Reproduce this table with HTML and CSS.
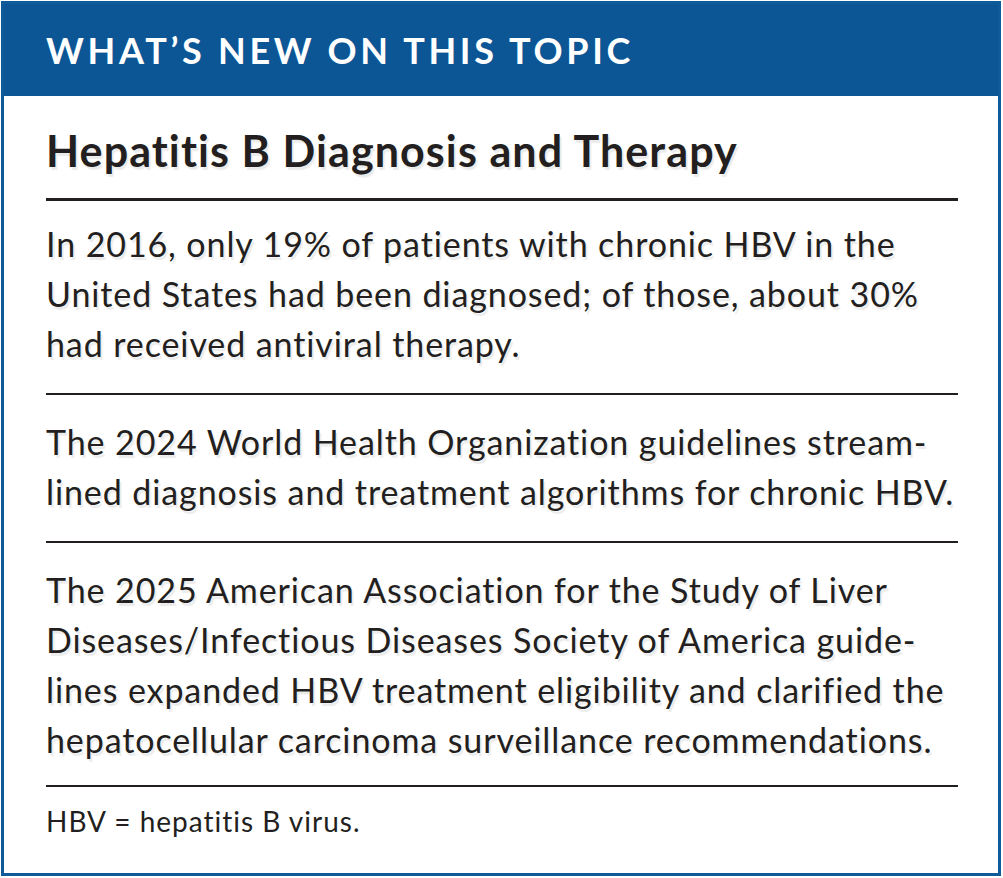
FILE: index.html
```html
<!DOCTYPE html>
<html lang="en">
<head>
<meta charset="utf-8">
<title>What's New on This Topic</title>
<link rel="stylesheet" href="styles.css">
</head>
<body>
<section class="box">
  <header class="band">WHAT’S NEW ON THIS TOPIC</header>
  <div class="content">
    <h1 class="title">Hepatitis B Diagnosis and Therapy</h1>
    <div class="item">
      <span class="ln">In 2016, only 19% of patients with chronic HBV in the</span>
      <span class="ln">United States had been diagnosed; of those, about 30%</span>
      <span class="ln">had received antiviral therapy.</span>
    </div>
    <div class="item">
      <span class="ln">The 2024 World Health Organization guidelines stream-</span>
      <span class="ln">lined diagnosis and treatment algorithms for chronic HBV.</span>
    </div>
    <div class="item">
      <span class="ln">The 2025 American Association for the Study of Liver</span>
      <span class="ln">Diseases/Infectious Diseases Society of America guide-</span>
      <span class="ln">lines expanded HBV treatment eligibility and clarified the</span>
      <span class="ln">hepatocellular carcinoma surveillance recommendations.</span>
    </div>
    <p class="note">HBV = hepatitis B virus.</p>
  </div>
</section>
</body>
</html>
```

FILE: styles.css
```css
* { box-sizing: border-box; }
html, body { margin: 0; padding: 0; background: #ffffff; }
body {
  font-family: Lato, "Open Sans", sans-serif;
  color: #231f20;
  font-variant-ligatures: none;
  font-feature-settings: "liga" 0, "clig" 0;
}

.box {
  margin: 1px 0 0 1px;
  width: 1000px;
  height: 875px;
  border: 3px solid #0f5a98;
  display: flex;
  flex-direction: column;
}

.band {
  height: 92px;
  background: #0c5696;
  color: #ffffff;
  font-weight: 700;
  font-size: 36px;
  letter-spacing: 3.7px;
  padding-left: 42px;
  display: flex;
  align-items: center;
}

.content {
  padding: 0 40px 0 42px;
}

.title {
  margin: 30px 0 0;
  font-size: 43px;
  line-height: 50px;
  font-weight: 700;
  letter-spacing: 1.1px;
  padding-bottom: 22px;
  border-bottom: 3px solid #231f20;
  text-shadow: 2px 3px 1px rgba(0, 0, 0, 0.08);
}

.item {
  padding: 22px 0 24px;
  border-bottom: 2px solid #231f20;
  font-size: 34px;
  line-height: 50px;
  letter-spacing: 0.9px;
  text-shadow: 2px 3px 1px rgba(0, 0, 0, 0.08);
}

.item:first-of-type { padding-top: 18px; }
.item:last-of-type { padding-bottom: 20px; }

.ln { display: block; white-space: nowrap; }

.note {
  margin: 0;
  padding-top: 16px;
  font-size: 28px;
  line-height: 36px;
  letter-spacing: 1px;
}
```
